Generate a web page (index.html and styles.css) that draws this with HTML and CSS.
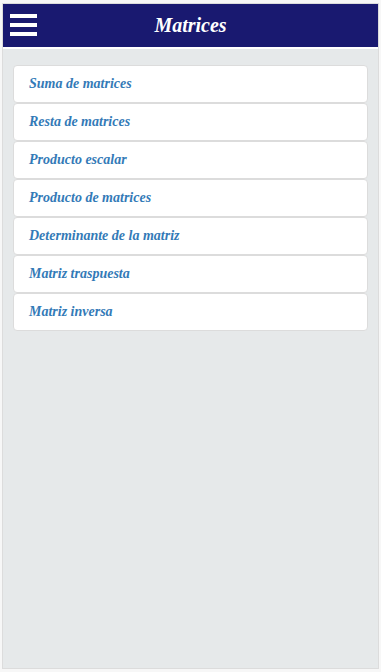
FILE: index.html
```html
<!DOCTYPE html>
<html lang="es">
<head>
    <meta charset="UTF-8">
    <meta name="viewport" content="width=device-width, initial-scale=1.0">
    <title>Matrices</title>
    <link rel="stylesheet" href="styles.css">
</head>
<body>
    <div class="page">
        <div class="header">
            <a class="menu-btn" href="#">
                <span></span><span></span><span></span>
            </a>
            <h1>Matrices</h1>
        </div>

        <div class="content">
            <ul class="menu-list">
                <li><a href="#">Suma de matrices</a></li>
                <li><a href="#">Resta de matrices</a></li>
                <li><a href="#">Producto escalar</a></li>
                <li><a href="#">Producto de matrices</a></li>
                <li><a href="#">Determinante de la matriz</a></li>
                <li><a href="#">Matriz traspuesta</a></li>
                <li><a href="#">Matriz inversa</a></li>
            </ul>
        </div>
    </div>
</body>
</html>
```

FILE: styles.css
```css
html, body {
    height: 100%;
}
body {
    font-family: "Liberation Serif", "Times New Roman", serif;
    background-color: #f7f7f7;
    margin: 0;
    padding: 3px 2px;
    box-sizing: border-box;
}
.page {
    height: 100%;
    box-sizing: border-box;
    border: 1px solid #dcdcdc;
    background: #e6e9ea;
    display: flex;
    flex-direction: column;
}
.header {
    position: relative;
    height: 43px;
    background-color: #191970;
    border-bottom: 2px solid #fff;
    display: flex;
    align-items: center;
    justify-content: center;
}
.header h1 {
    margin: 0;
    color: #fff;
    font-size: 20px;
    font-style: italic;
    font-weight: bold;
}
.menu-btn {
    position: absolute;
    left: 7px;
    top: 10px;
    width: 27px;
    display: flex;
    flex-direction: column;
    gap: 5px;
}
.menu-btn span {
    display: block;
    height: 4px;
    background: #fff;
}
.content {
    flex: 1;
    padding: 16px 10px;
}
.menu-list {
    list-style: none;
    margin: 0;
    padding: 0;
}
.menu-list li {
    background: #fff;
    border: 1px solid #dcdcdc;
    border-radius: 4px;
}
.menu-list a {
    display: block;
    height: 36px;
    line-height: 36px;
    padding: 0 15px;
    color: #337ab7;
    font-size: 14px;
    font-style: italic;
    font-weight: bold;
    text-decoration: none;
}
```
